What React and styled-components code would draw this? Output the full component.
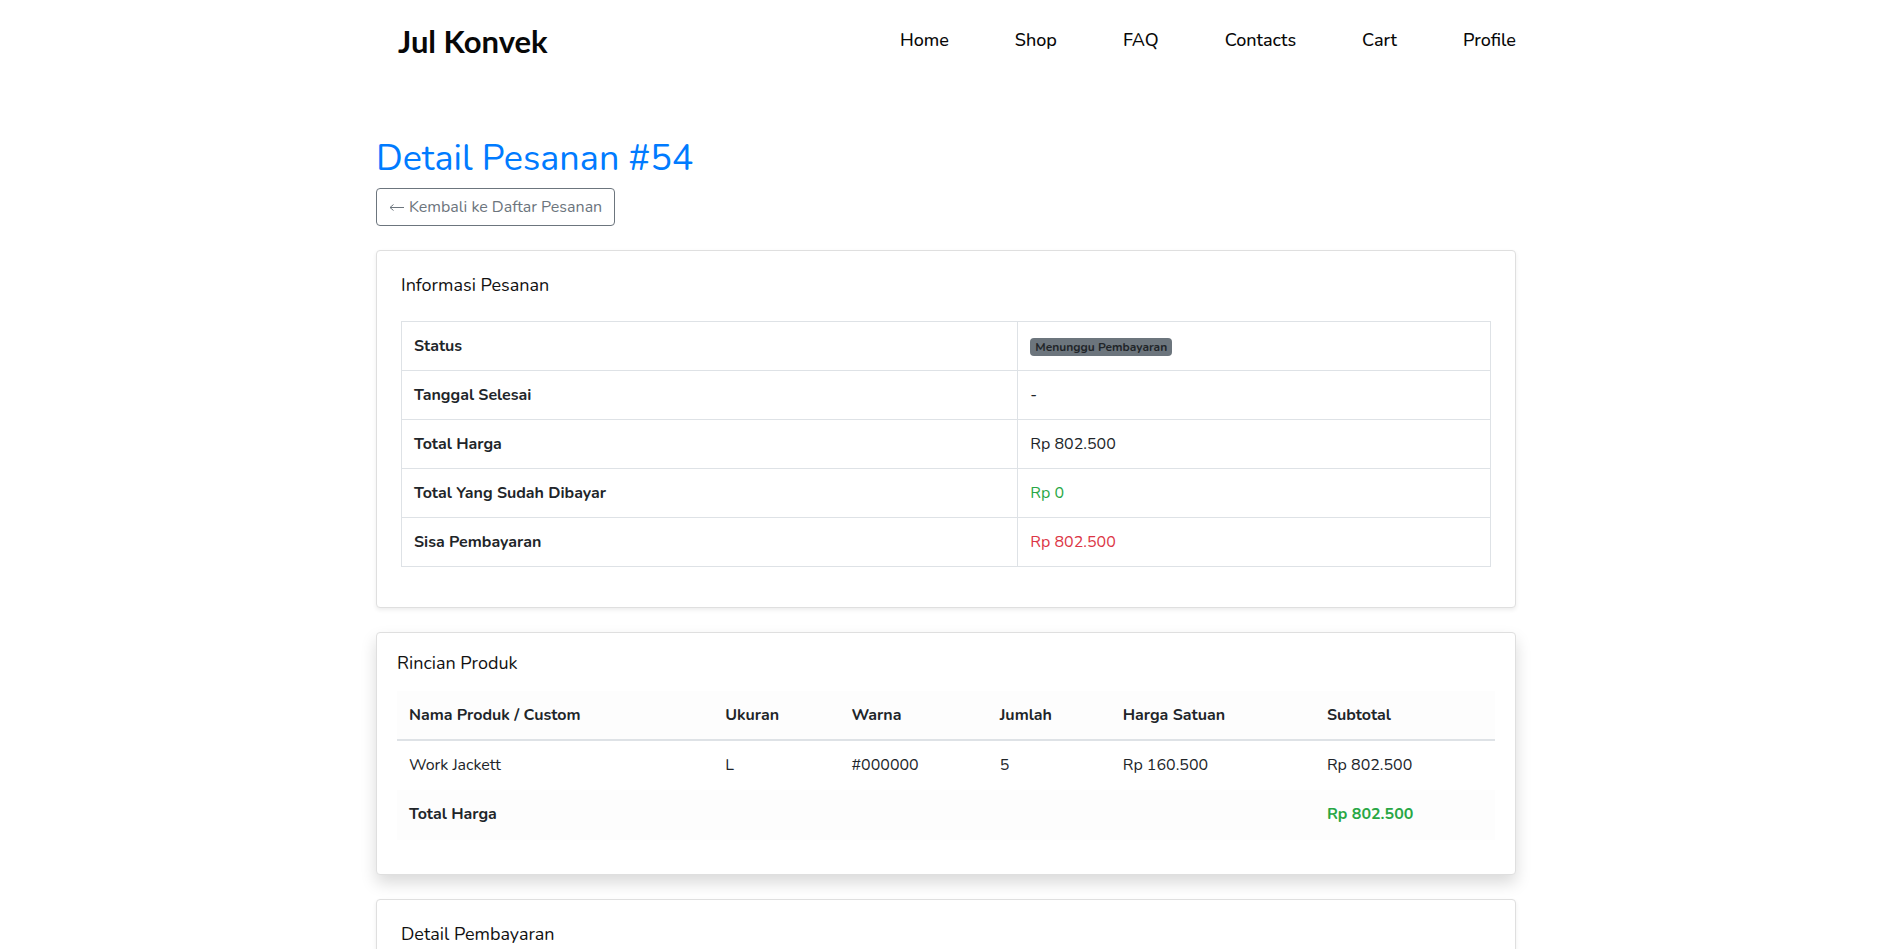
import React from "react";
import styled, { createGlobalStyle, css } from "styled-components";

const GlobalStyle = createGlobalStyle`
  *, *::before, *::after { box-sizing: border-box; }
  body {
    margin: 0;
    background: #fff;
    color: #212529;
    font-family: Nunito, Lato, "Open Sans", sans-serif;
    font-size: 16px;
    line-height: 24px;
  }
`;

const Container = styled.div`
  width: 100%;
  max-width: 1170px;
  margin: 0 auto;
  padding: 0 14px 0 16px;
`;

const Header = styled.header`
  display: flex;
  justify-content: space-between;
  align-items: flex-start;
  padding: 24px 0 0 22px;
  height: 100px;
`;

const Logo = styled.a`
  color: #080808;
  font-family: Lato, Nunito, sans-serif;
  font-size: 31px;
  font-weight: 700;
  line-height: 34px;
  text-decoration: none;
`;

const Nav = styled.nav`
  display: flex;
  gap: 66px;
  padding-top: 4px;
`;

const NavLink = styled.a`
  color: #080808;
  font-size: 18px;
  font-weight: 500;
  text-decoration: none;
`;

const Main = styled.main`
  padding-top: 36px;
`;

const PageTitle = styled.h1`
  margin: 0 0 6px;
  color: #007bff;
  font-size: 36px;
  font-weight: 400;
  line-height: 46px;
`;

const BackLink = styled.a`
  display: inline-flex;
  align-items: center;
  gap: 4px;
  height: 38px;
  padding: 0 12px;
  border: 1px solid #6c757d;
  border-radius: 4px;
  color: #6c757d;
  text-decoration: none;
`;

const Arrow = styled.svg`
  width: 16px;
  height: 16px;
  fill: none;
  stroke: currentColor;
  stroke-width: 1;
`;

const Card = styled.section`
  margin-top: 24px;
  padding: ${(p) => (p.$raised ? "20px 20px 34px" : "24px 24px 40px")};
  border: 1px solid #dfdfdf;
  border-radius: 4px;
  background: #fff;
  box-shadow: ${(p) =>
    p.$raised ? "0 8px 16px rgba(0, 0, 0, 0.15)" : "0 2px 4px rgba(0, 0, 0, 0.075)"};
`;

const CardTitle = styled.h2`
  margin: 0 0 ${(p) => (p.$tight ? 18 : 26)}px;
  color: #111;
  font-size: 18px;
  font-weight: 400;
  line-height: 20px;
`;

const Table = styled.table`
  width: 100%;
  border-collapse: collapse;
  table-layout: fixed;
`;

const tones = { success: "#28a745", danger: "#dc3545" };

const cell = css`
  padding: 12px;
  text-align: left;
  vertical-align: top;
  color: ${(p) => tones[p.$tone] || "inherit"};
  font-weight: ${(p) => (p.$strong ? 700 : 400)};
`;

const InfoTable = styled(Table)`
  th, td { border: 1px solid #dee2e6; }
`;

const HeadCell = styled.th`
  ${cell}
  font-weight: 700;
`;

const Cell = styled.td`
  ${cell}
`;

const Col = styled.col`
  width: ${(p) => p.$width};
`;

const ProductHead = styled.thead`
  background: #fdfdfd;
  th { border-bottom: 2px solid #dee2e6; }
`;

const ProductRow = styled.tr`
  height: 50px;
  background: ${(p) => (p.$shaded ? "#fdfdfd" : "transparent")};
`;

const Badge = styled.span`
  display: inline-block;
  padding: 3px 5px;
  border-radius: 4px;
  background: #6c757d;
  color: #212529;
  font-size: 12px;
  font-weight: 700;
  line-height: 12px;
`;

const navItems = ["Home", "Shop", "FAQ", "Contacts", "Cart", "Profile"];

const info = [
  { label: "Status", value: <Badge>Menunggu Pembayaran</Badge> },
  { label: "Tanggal Selesai", value: "-" },
  { label: "Total Harga", value: "Rp 802.500" },
  { label: "Total Yang Sudah Dibayar", value: "Rp 0", tone: "success" },
  { label: "Sisa Pembayaran", value: "Rp 802.500", tone: "danger" },
];

const columns = [
  { name: "Nama Produk / Custom", width: "28.8%" },
  { name: "Ukuran", width: "11.5%" },
  { name: "Warna", width: "13.5%" },
  { name: "Jumlah", width: "11.2%" },
  { name: "Harga Satuan", width: "18.6%" },
  { name: "Subtotal", width: "auto" },
];

const products = [["Work Jackett", "L", "#000000", "5", "Rp 160.500", "Rp 802.500"]];

export default function App() {
  return (
    <>
      <GlobalStyle />
      <Container>
        <Header>
          <Logo href="#">Jul Konvek</Logo>
          <Nav>
            {navItems.map((item) => (
              <NavLink key={item} href="#">{item}</NavLink>
            ))}
          </Nav>
        </Header>
        <Main>
          <PageTitle>Detail Pesanan #54</PageTitle>
          <BackLink href="#">
            <Arrow viewBox="0 0 16 16" aria-hidden="true">
              <path d="M1 8.5H15M4.5 5.5L1 8.5L4.5 11.5" />
            </Arrow>
            Kembali ke Daftar Pesanan
          </BackLink>

          <Card>
            <CardTitle>Informasi Pesanan</CardTitle>
            <InfoTable>
              <colgroup>
                <Col $width="56.6%" />
                <Col $width="auto" />
              </colgroup>
              <tbody>
                {info.map((row) => (
                  <tr key={row.label}>
                    <HeadCell scope="row">{row.label}</HeadCell>
                    <Cell $tone={row.tone}>{row.value}</Cell>
                  </tr>
                ))}
              </tbody>
            </InfoTable>
          </Card>

          <Card $raised>
            <CardTitle $tight>Rincian Produk</CardTitle>
            <Table>
              <colgroup>
                {columns.map((c) => (
                  <Col key={c.name} $width={c.width} />
                ))}
              </colgroup>
              <ProductHead>
                <tr>
                  {columns.map((c) => (
                    <HeadCell key={c.name} scope="col">{c.name}</HeadCell>
                  ))}
                </tr>
              </ProductHead>
              <tbody>
                {products.map((row) => (
                  <ProductRow key={row[0]}>
                    {row.map((value, i) => (
                      <Cell key={columns[i].name}>{value}</Cell>
                    ))}
                  </ProductRow>
                ))}
                <ProductRow $shaded>
                  <HeadCell scope="row" colSpan={5}>Total Harga</HeadCell>
                  <Cell $strong $tone="success">Rp 802.500</Cell>
                </ProductRow>
              </tbody>
            </Table>
          </Card>

          <Card>
            <CardTitle>Detail Pembayaran</CardTitle>
          </Card>
        </Main>
      </Container>
    </>
  );
}
